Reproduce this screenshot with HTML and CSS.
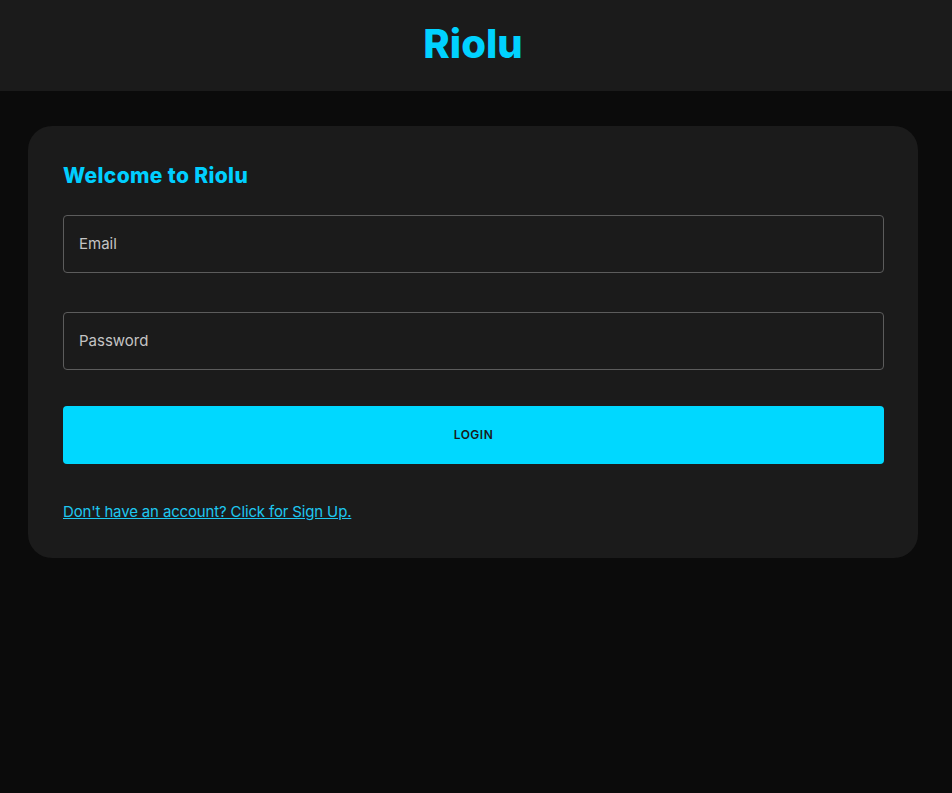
FILE: index.html
```html
<!DOCTYPE html>
<html lang="en">
<head>
<meta charset="utf-8">
<title>Riolu</title>
<link rel="stylesheet" href="styles.css">
</head>
<body>
<header class="topbar">
  <h1 class="brand">Riolu</h1>
</header>
<main class="content">
  <section class="card">
    <h2 class="welcome">Welcome to Riolu</h2>
    <form class="form">
      <div class="field"><span class="field-label">Email</span></div>
      <div class="field"><span class="field-label">Password</span></div>
      <button type="button" class="login">LOGIN</button>
    </form>
    <a class="signup" href="#">Don't have an account? Click for Sign Up.</a>
  </section>
</main>
</body>
</html>
```
FILE: styles.css
```css
* { box-sizing: border-box; }
html, body { margin: 0; padding: 0; }
body {
  background: #0b0b0b;
  font-family: Inter, "Noto Sans", "Liberation Sans", sans-serif;
  min-height: 793px;
}
.topbar {
  height: 91px;
  background: #1b1b1b;
  display: flex;
  align-items: center;
  justify-content: center;
}
.brand {
  margin: 0 6px 0 0;
  color: #00d2ff;
  font-size: 40px;
  font-weight: 800;
  letter-spacing: 0;
  padding-bottom: 4px;
}
.content {
  padding: 35px 34px 0 28px;
}
.card {
  background: #1b1b1b;
  border-radius: 24px;
  padding: 36px 34px 35px 35px;
  display: flex;
  flex-direction: column;
}
.welcome {
  margin: 0 0 25px 0;
  color: #00cfff;
  font-size: 21px;
  font-weight: 800;
  line-height: 28px;
  letter-spacing: 0.35px;
}
.form {
  display: flex;
  flex-direction: column;
}
.field {
  height: 58px;
  border: 1px solid #5c5c5c;
  border-radius: 4px;
  display: flex;
  align-items: center;
  padding: 0 15px 2px;
  margin-bottom: 39px;
}
.field + .field { height: 58px; margin-bottom: 36px; }
.field-label {
  color: #c4c4c4;
  font-size: 15px;
}
.login {
  height: 58px;
  border: none;
  border-radius: 4px;
  background: #00d8ff;
  color: #1a1a1a;
  font-family: inherit;
  font-size: 12px;
  font-weight: 600;
  letter-spacing: 0.5px;
  margin-bottom: 37px;
  padding-bottom: 2px;
}
.signup {
  color: #1ec8f0;
  font-size: 15px;
  line-height: 22px;
  letter-spacing: -0.15px;
  text-decoration: underline;
  align-self: flex-start;
}
```
